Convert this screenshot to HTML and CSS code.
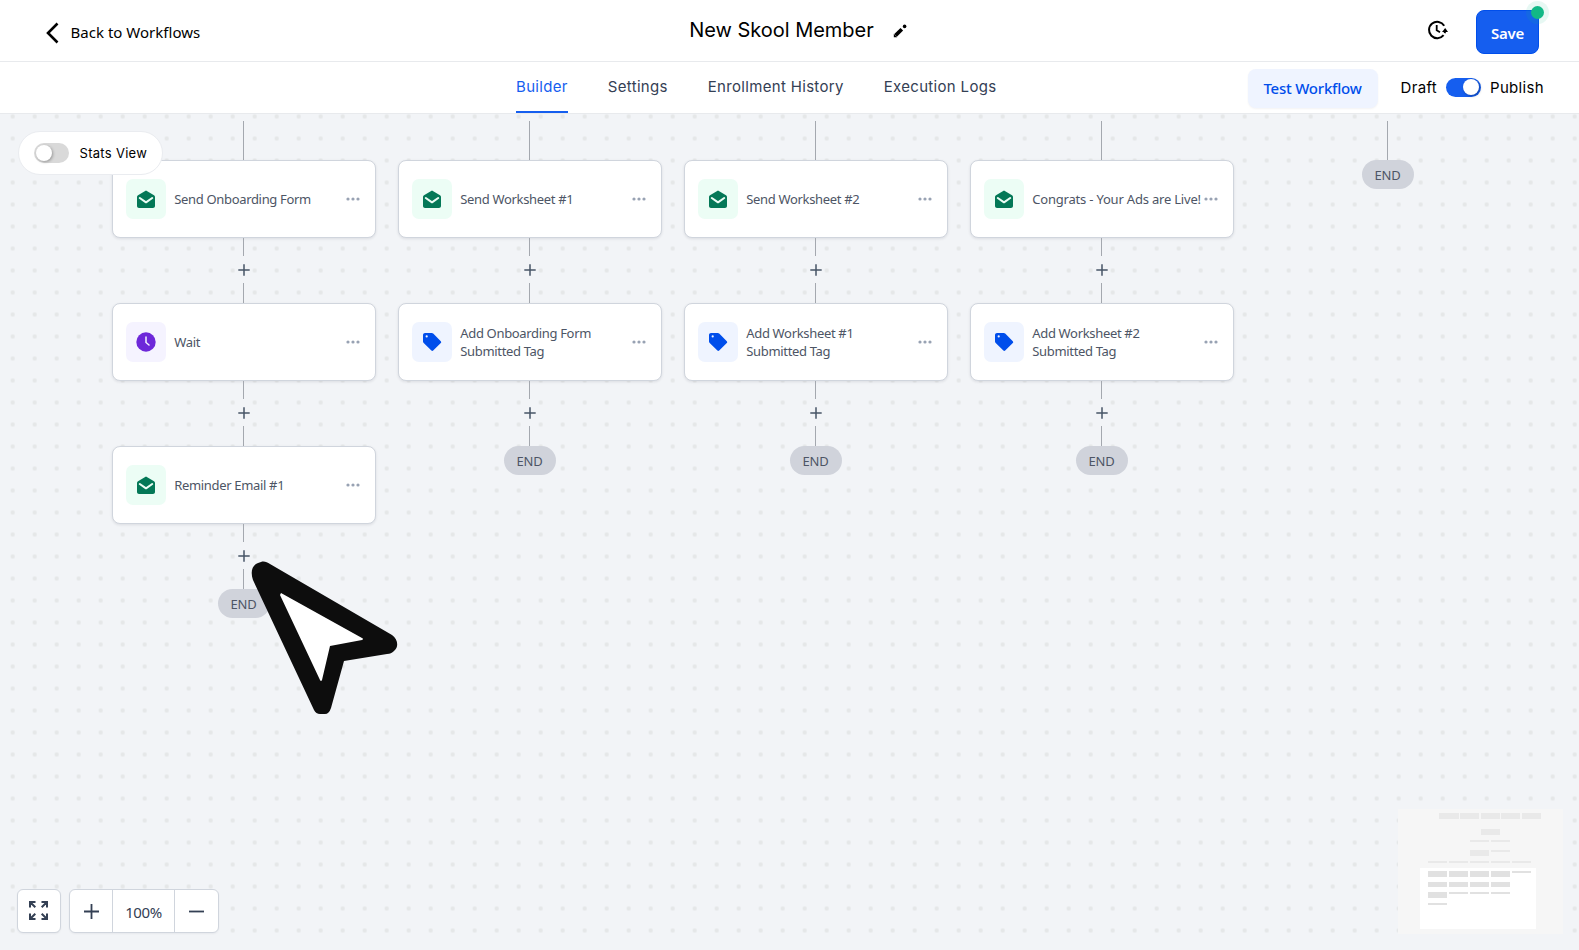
FILE: index.html
```html
<!DOCTYPE html>
<html lang="en">
<head>
<meta charset="utf-8">
<title>New Skool Member</title>
<link rel="stylesheet" href="styles.css">
</head>
<body>
<svg class="defs" aria-hidden="true">
  <symbol id="mail" viewBox="0 0 20 20"><path fill="#047857" d="M10 1.500 18 6.200c.7.400 1 1 1 1.700V17c0 1.100-.9 2-2 2H3c-1.100 0-2-.9-2-2V7.900c0-.7.3-1.300 1-1.700z"/><path d="M3.800 9 10 13.300 16.200 9" fill="none" stroke="#ecfdf5" stroke-width="2.100" stroke-linecap="round" stroke-linejoin="round"/></symbol>
  <symbol id="clock" viewBox="0 0 20 20"><circle cx="10" cy="10" r="9.700" fill="#6d28d9"/><path d="M10 5v5.500l3 2.500" fill="none" stroke="#f5f3ff" stroke-width="1.500" stroke-linecap="round"/></symbol>
  <symbol id="tag" viewBox="0 0 20 20"><path fill="#004eeb" fill-rule="evenodd" d="M3 1h6.800c.5 0 1 .2 1.400.6l7.600 7.600c.5.500.5 1.300 0 1.800l-7.600 7.600c-.5.500-1.300.5-1.800 0L1.700 11C1.300 10.600 1 10 1 9.500V3c0-1.100.9-2 2-2zm1.700 2.300a1.100 1.100 0 1 0 0 2.200 1.100 1.100 0 0 0 0-2.200z"/></symbol>
  <symbol id="dots" viewBox="0 0 14 4"><g fill="#98a2b3"><circle cx="2" cy="2" r="1.600"/><circle cx="7" cy="2" r="1.600"/><circle cx="12" cy="2" r="1.600"/></g></symbol>
  <symbol id="plus" viewBox="0 0 12 12"><path d="M.3 6h11.400M6 .3v11.400" stroke="#475467" stroke-width="1.500"/></symbol>
</svg>

<header class="topbar">
  <a class="back"><svg width="13" height="22" viewBox="0 0 13 22"><path d="M11.500 1.500 2 11l9.500 9.500" fill="none" stroke="#000" stroke-width="2.600"/></svg><span>Back to Workflows</span></a>
  <div class="title"><h1>New Skool Member</h1><svg width="14" height="14" viewBox="0 0 14 14"><path d="M2.600 11.400 8.800 5.200" stroke="#000" stroke-width="3.700"/><path d="M.8 9.800V13.200H4.200z"/><circle cx="11.600" cy="2.400" r="1.800"/></svg></div>
  <div class="actions">
    <svg class="history" width="21" height="20" viewBox="0 0 21 20"><path d="M17.200 5.700A8.200 8.200 0 1 0 16.600 15.200" fill="none" stroke="#000" stroke-width="2"/><path d="M9.700 5V10.200l3.300 2" fill="none" stroke="#000" stroke-width="1.800"/><path d="m15 12 3.200-3.900L21 12z" fill="#000"/><path d="M18.100 10.500c0 1-.2 1.900-.5 2.700" fill="none" stroke="#000" stroke-width="2"/></svg>
    <button class="save">Save<span class="pulse"></span></button>
  </div>
</header>

<nav class="subnav">
  <div class="tabs"><a class="tab active">Builder</a><a class="tab">Settings</a><a class="tab">Enrollment History</a><a class="tab">Execution Logs</a></div>
  <div class="publish"><button class="test">Test Workflow</button><span>Draft</span><span class="switch on"></span><span>Publish</span></div>
</nav>

<main class="canvas">
  <div class="columns">
    <section class="column">
      <i class="line first"></i>
      <article class="card"><span class="icon green"><svg width="20" height="20"><use href="#mail"/></svg></span><p>Send Onboarding Form</p><svg class="more" width="14" height="4"><use href="#dots"/></svg></article>
      <div class="join"><i class="line"></i><svg width="12" height="12"><use href="#plus"/></svg><i class="line"></i></div>
      <article class="card"><span class="icon purple"><svg width="20" height="20"><use href="#clock"/></svg></span><p>Wait</p><svg class="more" width="14" height="4"><use href="#dots"/></svg></article>
      <div class="join"><i class="line"></i><svg width="12" height="12"><use href="#plus"/></svg><i class="line"></i></div>
      <article class="card"><span class="icon green"><svg width="20" height="20"><use href="#mail"/></svg></span><p>Reminder Email #1</p><svg class="more" width="14" height="4"><use href="#dots"/></svg></article>
      <div class="join"><i class="line"></i><svg width="12" height="12"><use href="#plus"/></svg><i class="line"></i></div>
      <span class="end">END</span>
    </section>
    <section class="column">
      <i class="line first"></i>
      <article class="card"><span class="icon green"><svg width="20" height="20"><use href="#mail"/></svg></span><p>Send Worksheet #1</p><svg class="more" width="14" height="4"><use href="#dots"/></svg></article>
      <div class="join"><i class="line"></i><svg width="12" height="12"><use href="#plus"/></svg><i class="line"></i></div>
      <article class="card"><span class="icon blue"><svg width="20" height="20"><use href="#tag"/></svg></span><p>Add Onboarding Form<br>Submitted Tag</p><svg class="more" width="14" height="4"><use href="#dots"/></svg></article>
      <div class="join"><i class="line"></i><svg width="12" height="12"><use href="#plus"/></svg><i class="line"></i></div>
      <span class="end">END</span>
    </section>
    <section class="column">
      <i class="line first"></i>
      <article class="card"><span class="icon green"><svg width="20" height="20"><use href="#mail"/></svg></span><p>Send Worksheet #2</p><svg class="more" width="14" height="4"><use href="#dots"/></svg></article>
      <div class="join"><i class="line"></i><svg width="12" height="12"><use href="#plus"/></svg><i class="line"></i></div>
      <article class="card"><span class="icon blue"><svg width="20" height="20"><use href="#tag"/></svg></span><p>Add Worksheet #1<br>Submitted Tag</p><svg class="more" width="14" height="4"><use href="#dots"/></svg></article>
      <div class="join"><i class="line"></i><svg width="12" height="12"><use href="#plus"/></svg><i class="line"></i></div>
      <span class="end">END</span>
    </section>
    <section class="column">
      <i class="line first"></i>
      <article class="card"><span class="icon green"><svg width="20" height="20"><use href="#mail"/></svg></span><p class="long">Congrats - Your Ads are Live!</p><svg class="more" width="14" height="4"><use href="#dots"/></svg></article>
      <div class="join"><i class="line"></i><svg width="12" height="12"><use href="#plus"/></svg><i class="line"></i></div>
      <article class="card"><span class="icon blue"><svg width="20" height="20"><use href="#tag"/></svg></span><p>Add Worksheet #2<br>Submitted Tag</p><svg class="more" width="14" height="4"><use href="#dots"/></svg></article>
      <div class="join"><i class="line"></i><svg width="12" height="12"><use href="#plus"/></svg><i class="line"></i></div>
      <span class="end">END</span>
    </section>
    <section class="column">
      <i class="line first"></i>
      <span class="end">END</span>
    </section>
  </div>

  <label class="stats"><span class="switch"></span>Stats View</label>

  <svg class="pointer" width="150" height="156" viewBox="0 0 150 156">
    <path d="M10 1C13 0 16 1 19 3L141 74C147 78 148 86 143 90C141 92 139 93 136 93L93 100L80 147Q78 153 74 153H69Q65 153 63 149L2 19C-1 10 1 3 10 1Z" fill="#0d0d0d"/>
    <path d="M30 32 111 77Q113 78 111 79L79 85 71 119Q70 121 69 119L29 34Z" fill="#fff"/>
  </svg>

  <div class="controls">
    <button class="box fit"><svg width="19" height="19" viewBox="0 0 19 19"><g fill="none" stroke="#344054" stroke-width="2"><path d="M1 6.500V1H6.500M1 1 6.300 6.300M12.500 1H18V6.500M18 1 12.700 6.300M1 12.500V18H6.500M1 18 6.300 12.700M12.500 18H18V12.500M18 18 12.700 12.700"/></g></svg></button>
    <div class="box zoom">
      <button><svg width="15" height="15" viewBox="0 0 15 15"><path d="M0 7.500H15M7.500 0V15" stroke="#344054" stroke-width="1.800"/></svg></button>
      <span>100%</span>
      <button><svg width="15" height="15" viewBox="0 0 15 15"><path d="M0 7.500H15" stroke="#344054" stroke-width="1.800"/></svg></button>
    </div>
  </div>

  <svg class="minimap" width="165" height="125" viewBox="0 0 165 125">
    <path fill="#f6f6f6" d="M0 0h165v125H0z"/>
    <path fill="#e9e9e9" d="M41 4h20v6H41zM62 4h19v6H62zM83 4h19v6H83zM103 4h19v6h-19zM124 4h19v6h-19zM83 20h19v6H83zM72 31h19v2H72zM93 31h19v2H93zM72 41h19v6H72zM93 41h19v2H93zM30 52h19v2H30zM51 52h19v2H51zM72 52h19v2H72zM93 52h19v2H93zM114 52h19v2h-19z"/>
    <path fill="#fff" d="M22 59h116v61H22z"/>
    <path fill="#e1e1e1" d="M30 62h19v6H30zM51 62h19v6H51zM72 62h19v6H72zM93 62h19v6H93zM114 62h19v2h-19zM30 73h19v5H30zM51 73h19v5H51zM72 73h19v5H72zM93 73h19v5H93zM30 83h19v6H30zM51 83h19v2H51zM72 83h19v2H72zM93 83h19v2H93zM30 94h19v2H30z"/>
  </svg>
</main>
</body>
</html>
```
FILE: styles.css
```css
* { box-sizing: border-box; }
body { margin: 0; height: 950px; display: flex; flex-direction: column; overflow: hidden; background: #fff; color: #000; font-family: Inter, sans-serif; }
button { font: inherit; border: 0; padding: 0; background: none; }
.defs { position: absolute; width: 0; height: 0; }

.topbar { height: 62px; flex: none; display: grid; grid-template-columns: 1fr auto 1fr; border-bottom: 1px solid #e8eaed; }
.back { display: flex; align-items: center; gap: 11.500px; padding: 3px 0 0 46px; font: 15px "Noto Sans", sans-serif; letter-spacing: .02px; }
.back span { margin-bottom: 1px; }
.title { display: flex; align-items: center; gap: 19px; padding-left: 17px; }
.title h1 { margin: 0; font-size: 20px; font-weight: 400; line-height: 60px; padding-bottom: 2px; letter-spacing: -.03px; }
.title svg { margin-bottom: 1px; }
.actions { display: flex; justify-content: flex-end; padding-right: 40px; gap: 28px; }
.history { margin-top: 20px; }
.save { position: relative; width: 63px; height: 44px; margin-top: 10px; border: 1px solid #004eeb; border-radius: 8px; background: #155eef; color: #fff; font: 600 15px "Noto Sans", sans-serif; letter-spacing: -.3px; padding-top: 1px; }
.pulse { position: absolute; top: -5px; right: -6px; width: 13px; height: 13px; border-radius: 50%; background: #12b886; box-shadow: 0 0 0 5px rgba(18, 184, 134, .1); }

.subnav { height: 52px; flex: none; display: flex; justify-content: space-between; border-bottom: 1px solid #e8eaed; padding: 0 35px 0 516px; }
.tabs { display: flex; gap: 40px; }
.tab { font-size: 15px; line-height: 50px; letter-spacing: .32px; color: #344054; height: 51px; }
.tab.active { color: #155eef; border-bottom: 2px solid #155eef; }
.publish { display: flex; align-items: center; gap: 9px; font-size: 15px; letter-spacing: .33px; height: 50px; }
.test { width: 130px; height: 39px; margin: 3px 14px 0 0; padding-bottom: 2px; border-radius: 8px; background: #eff4ff; color: #004eeb; font: 500 15px "Noto Sans", sans-serif; letter-spacing: -.22px; box-shadow: 0 1px 2px rgba(16, 24, 40, .05); }
.switch { display: flex; align-items: center; width: 35px; height: 20px; border-radius: 10px; background: #d9d9d9; padding: 0 2px; }
.switch::after { content: ""; width: 16px; height: 16px; border-radius: 50%; background: #fff; box-shadow: 1px 1px 3px rgba(0, 0, 0, .3); }
.switch.on { background: #155eef; justify-content: flex-end; height: 19px; }

.canvas { position: relative; flex: 1; background: #f2f4f7 radial-gradient(circle at 11px 11px, #e5e7e8 1.700px, transparent 2.600px) 1.700px -8.500px / 22px 22px; }
.columns { display: flex; gap: 23px; padding: 7px 0 0 112px; }
.column { width: 263px; display: flex; flex-direction: column; align-items: center; }
.line { width: 1px; background: #a4a8af; }
.line.first { height: 39px; }
.card { width: 264px; height: 78px; display: flex; align-items: center; border: 1px solid #d0d5dd; border-radius: 8px; background: #fff; padding: 0 15px 1px 13px; margin-right: -.5px; box-shadow: 0 1px 3px rgba(16, 24, 40, .1); }
.icon { width: 40px; height: 40px; flex: none; border-radius: 7px; display: grid; place-items: center; }
.green { background: #ecfdf5; }
.purple { background: #f5f3ff; }
.blue { background: #eff4ff; }
.card p { flex: 1; margin: 1px 0 0 8.500px; font: 13px/18px "Noto Sans", sans-serif; letter-spacing: -.33px; color: #4d5565; white-space: nowrap; }
.card .long { letter-spacing: -.2px; }
.more { flex: none; }
.join { height: 65px; display: flex; flex-direction: column; align-items: center; justify-content: space-between; }
.join .line { height: 18px; }
.join .line:last-child { height: 20px; }
.end { width: 52px; height: 29px; border-radius: 15px; background: #d0d3db; color: #4d5565; font: 13px/30px "Noto Sans", sans-serif; letter-spacing: -.2px; text-align: center; }

.stats { position: absolute; left: 17.500px; top: 17px; width: 145px; height: 44px; border: 1px solid #eaecf0; border-radius: 22px; background: #fff; display: flex; align-items: center; gap: 11px; padding: 0 0 1px 15px; font-size: 13px; letter-spacing: .3px; }
.pointer { position: absolute; left: 251px; top: 447px; }
.controls { position: absolute; left: 17px; bottom: 17px; display: flex; gap: 8px; }
.box { height: 44px; background: #fff; border: 1px solid #d0d5dd; border-radius: 6px; display: flex; align-items: center; justify-content: center; box-shadow: 0 1px 2px rgba(16, 24, 40, .05); }
.fit { width: 44px; padding: 0 1px 1px 0; }
.zoom { width: 150px; }
.zoom button { width: 43px; height: 42px; display: grid; place-items: center; }
.zoom button:first-child { width: 42px; }
.zoom span { flex: 1; height: 42px; border: solid #d0d5dd; border-width: 0 1px; text-align: center; font: 15px/44px "Noto Sans", sans-serif; letter-spacing: -.4px; color: #344054; }
.minimap { position: absolute; right: 16px; bottom: 16px; }
```
